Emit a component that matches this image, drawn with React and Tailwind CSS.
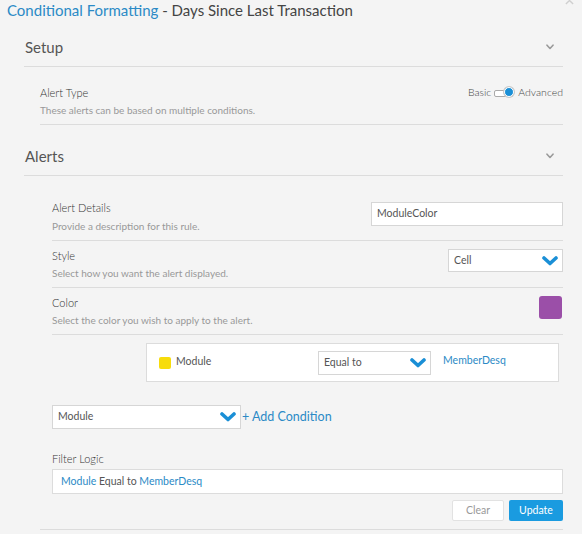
import React from "react";

const Chevron = ({ className = "" }) => (
  <svg viewBox="0 0 16 10" className={className} fill="none">
    <path d="M2 2 L8 7.5 L14 2" stroke="#1a8fd6" strokeWidth="3.6" strokeLinecap="round" strokeLinejoin="round" />
  </svg>
);

const SmallChevron = () => (
  <svg viewBox="0 0 8 6" className="w-[8px] h-[6px]" fill="none">
    <path d="M1 1.2 L4 4.5 L7 1.2" stroke="#9a9a9a" strokeWidth="1.6" strokeLinecap="round" strokeLinejoin="round" />
  </svg>
);

const Select = ({ value, className = "" }) => (
  <div className={`flex items-center justify-between bg-white border border-[#d6d6d6] pl-[5px] pr-[4px] ${className}`}>
    <span className="text-[10.5px] text-[#555]">{value}</span>
    <Chevron className="w-[16px] h-[10px]" />
  </div>
);

const Row = ({ label, desc, children, pt = "pt-[8px]", gap = "mt-[3px]" }) => (
  <div className={`${pt} pb-[7px] border-b border-[#dcdcdc] flex justify-between items-start`}>
    <div>
      <div className="text-[11px] leading-[14px] text-[#333] font-light">{label}</div>
      <div className={`text-[10px] leading-[14px] ${gap} text-[#999]`}>{desc}</div>
    </div>
    {children}
  </div>
);

export default function App() {
  return (
    <div
      className="relative w-[582px] h-[534px] bg-[#f4f4f4] overflow-hidden"
      style={{ fontFamily: "Lato, 'Open Sans', sans-serif" }}
    >
      <svg className="absolute right-[8px] top-[-4px] w-[9px] h-[9px]" viewBox="0 0 10 10">
        <path d="M1 1 L9 9 M9 1 L1 9" stroke="#cfcfcf" strokeWidth="1.6" />
      </svg>
      <div className="pl-[7px] leading-[20px] text-[15px]">
        <span className="text-[#2b8ac6]">Conditional Formatting</span>
        <span className="text-[#444]"> - Days Since Last Transaction</span>
      </div>

      {/* Setup */}
      <div className="ml-[24px] w-[539px] mt-[8px]">
        <div className="h-[39px] flex items-center justify-between border-b border-[#dcdcdc] pl-[1px] pr-[9px]">
          <span className="text-[15px] text-[#555]">Setup</span>
          <SmallChevron />
        </div>
        <div className="ml-[16px]">
          <Row
            pt="pt-[19px]"
            label="Alert Type"
            desc="These alerts can be based on multiple conditions."
          >
            <div className="flex items-center h-[14px] text-[10.5px] text-[#444] font-light">
              <span>Basic</span>
              <div className="relative ml-[3px] w-[16px] h-[7px] border border-[#aaa] rounded-[2px] bg-white">
                <div className="absolute right-[-5px] top-[-3.5px] w-[10px] h-[10px] rounded-full bg-[#1a8fd6] border-[1.5px] border-white shadow-[0_0_0_1px_#c8c8c8]" />
              </div>
              <span className="ml-[8px]">Advanced</span>
            </div>
          </Row>
        </div>

        {/* Alerts */}
        <div className="mt-[12px] h-[39px] flex items-center justify-between border-b border-[#dcdcdc] pl-[1px] pr-[9px]">
          <span className="text-[15px] text-[#555]">Alerts</span>
          <SmallChevron />
        </div>
        <div className="ml-[16px] border-b border-[#dcdcdc] pb-[8px]">
          <div className="ml-[12px]">
            <Row pt="pt-[25px]" gap="mt-[4px]" label="Alert Details" desc="Provide a description for this rule.">
              <div className="w-[192px] h-[24px] mt-[1px] bg-white border border-[#d6d6d6] flex items-center pl-[5px] text-[10.5px] text-[#555]">
                ModuleColor
              </div>
            </Row>
            <Row label="Style" desc="Select how you want the alert displayed.">
              <Select value="Cell" className="w-[115px] h-[23px]" />
            </Row>
            <Row label="Color" desc="Select the color you wish to apply to the alert.">
              <div className="w-[23px] h-[23px] rounded-[3px] bg-[#9b4fa8] mr-[1px]" />
            </Row>

            <div className="mt-[8px] ml-[94px] w-[413px] h-[39px] bg-white border border-[#dcdcdc] flex items-center pl-[12px]">
              <div className="w-[12px] h-[12px] rounded-[2px] bg-[#f7dc0c]" />
              <span className="ml-[5px] text-[10.5px] text-[#555] w-[142px] -mt-[2px]">Module</span>
              <Select value="Equal to" className="w-[113px] h-[24px]" />
              <span className="ml-[12px] text-[10.5px] text-[#2b8ac6] -mt-[3px]">MemberDesq</span>
            </div>

            <div className="mt-[23px] flex items-center">
              <Select value="Module" className="w-[189px] h-[24px]" />
              <span className="ml-[1px] text-[12.5px] text-[#2b8ac6]">+ Add Condition</span>
            </div>

            <div className="mt-[23px] text-[11px] leading-[14px] text-[#333] font-light">Filter Logic</div>
            <div className="mt-[3px] h-[25px] bg-white border border-[#dcdcdc] flex items-center pl-[8px] text-[10.5px]">
              <span className="text-[#2b8ac6]">Module</span>
              <span className="text-[#555]">&nbsp;Equal to&nbsp;</span>
              <span className="text-[#2b8ac6]">MemberDesq</span>
            </div>
            <div className="mt-[6px] flex justify-end gap-[5px]">
              <div className="w-[52px] h-[21px] bg-white border border-[#e2e2e2] rounded-[2px] flex items-center justify-center text-[10.5px] text-[#999]">Clear</div>
              <div className="w-[54px] h-[21px] bg-[#1a9be0] rounded-[2px] flex items-center justify-center text-[10.5px] text-white">Update</div>
            </div>
          </div>
        </div>
      </div>
    </div>
  );
}
